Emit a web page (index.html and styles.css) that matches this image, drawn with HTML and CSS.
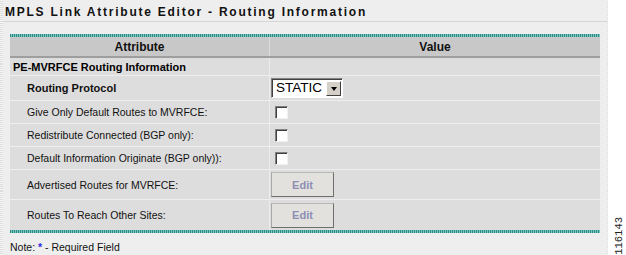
FILE: index.html
```html
<!DOCTYPE html>
<html>
<head>
<meta charset="utf-8">
<link rel="stylesheet" href="styles.css">
</head>
<body>
<div class="page">
  <div class="panel">
    <div class="title">MPLS Link Attribute Editor - Routing Information</div>
    <div class="body">
      <div class="rule"></div>
      <div class="grid">
        <div class="row head"><div class="cell">Attribute</div><div class="cell">Value</div></div>
        <div class="row section"><div class="cell">PE-MVRFCE Routing Information</div><div class="cell"></div></div>
        <div class="row r25"><div class="cell label bold">Routing Protocol</div><div class="cell val">
          <div class="select"><span class="sel-text">STATIC</span><span class="sel-btn"><span class="tri"></span></span></div>
        </div></div>
        <div class="row r23"><div class="cell label">Give Only Default Routes to MVRFCE:</div><div class="cell val"><span class="check"></span></div></div>
        <div class="row r23"><div class="cell label">Redistribute Connected (BGP only):</div><div class="cell val"><span class="check"></span></div></div>
        <div class="row r23"><div class="cell label">Default Information Originate (BGP only)):</div><div class="cell val"><span class="check"></span></div></div>
        <div class="row r30"><div class="cell label">Advertised Routes for MVRFCE:</div><div class="cell val"><span class="btn">Edit</span></div></div>
        <div class="row r30 last"><div class="cell label">Routes To Reach Other Sites:</div><div class="cell val"><span class="btn">Edit</span></div></div>
      </div>
      <div class="rule"></div>
      <div class="note">Note: <span class="star">*</span> - Required Field</div>
    </div>
  </div>
  <div class="side"><span class="fig">116143</span></div>
</div>
</body>
</html>
```
FILE: styles.css
```css
html, body {
  margin: 0;
  padding: 0;
  background: #ffffff;
  font-family: "Liberation Sans", Arial, sans-serif;
  color: #000;
}
.page {
  display: flex;
  width: 626px;
  height: 255px;
  overflow: hidden;
}
.panel {
  width: 604px;
  height: 255px;
  background: #efeeee;
  border-left: 3px solid transparent;
  border-image: repeating-linear-gradient(180deg, #dcdcdc 0 1px, #f6f6f6 1px 2px) 1;
  border-right: 1px solid #f8f8f8;
  box-sizing: content-box;
}
.title {
  height: 21px;
  border-bottom: 1px solid #d5d5d5;
  padding-left: 2px;
  font-weight: bold;
  font-size: 12px;
  letter-spacing: 1.76px;
  line-height: 25px;
  color: #111;
}
.body {
  padding: 12px 3px 0 7px;
}
.rule {
  height: 3px;
  width: 590px;
  background: repeating-linear-gradient(90deg, #2a8a84 0 1px, #7cc8c0 1px 2px);
}
.grid {
  width: 590px;
  background: #dedddd;
}
.row {
  display: grid;
  grid-template-columns: 260px 330px;
  box-sizing: border-box;
  border-bottom: 1px solid #efeeee;
}
.row.last { border-bottom: none; }
.cell {
  display: flex;
  align-items: center;
  font-size: 10.5px;
}
.cell:first-child {
  border-right: 1px solid #ececec;
}
.head {
  height: 21px;
  background: #c9c8c8;
  border-bottom: 2px solid #9e9e9e;
}
.head .cell {
  justify-content: center;
  font-weight: bold;
  font-size: 12px;
  color: #111;
}
.head .cell:first-child { border-right: 1px solid #dcdcdc; }
.section { height: 18px; }
.section .cell:first-child {
  font-weight: bold;
  font-size: 11px;
  padding-left: 3px;
}
.r25 { height: 25px; }
.r23 { height: 23px; }
.r30 { height: 30px; }
.label { padding-left: 17px; color: #111; }
.label.bold { font-weight: bold; font-size: 11px; }
.val { padding-left: 1px; }
.select {
  display: flex;
  align-items: center;
  width: 72px;
  height: 20px;
  box-sizing: border-box;
  background: #fff;
  border: 1px solid;
  border-color: #808080 #ffffff #ffffff #808080;
  box-shadow: inset 1px 1px 0 #404040;
}
.sel-text {
  flex: 1;
  font-size: 13.5px;
  padding-left: 4px;
  line-height: 18px;
}
.sel-btn {
  width: 15px;
  height: 15px;
  margin-right: 1px;
  margin-top: 1px;
  background: #d4d0c8;
  border: 1px solid;
  border-color: #ffffff #404040 #404040 #ffffff;
  box-sizing: border-box;
  display: flex;
  align-items: center;
  justify-content: center;
}
.tri {
  width: 0;
  height: 0;
  border-left: 3.5px solid transparent;
  border-right: 3.5px solid transparent;
  border-top: 4px solid #000;
  margin-top: 1px;
}
.check {
  display: block;
  width: 13px;
  height: 13px;
  box-sizing: border-box;
  margin-left: 4px;
  margin-top: 1px;
  background: #fff;
  border: 1px solid;
  border-color: #808080 #f0f0f0 #f0f0f0 #808080;
  box-shadow: inset 1px 1px 0 #404040;
}
.btn {
  display: flex;
  align-items: center;
  justify-content: center;
  width: 63px;
  height: 25px;
  box-sizing: border-box;
  background: #e3e1de;
  border: 1px solid;
  border-color: #b8b8b8 #6e6e6e #6e6e6e #a8a8a8;
  font-weight: bold;
  font-size: 11px;
  color: #8c8fb3;
}
.note {
  margin-top: 7px;
  margin-left: 0px;
  font-size: 10.5px;
  line-height: 14px;
  color: #111;
}
.star { color: #2a2ae0; font-weight: bold; }
.side {
  flex: 1;
  display: flex;
  align-items: flex-end;
  justify-content: center;
  padding-left: 3px;
}
.fig {
  writing-mode: vertical-rl;
  transform: rotate(180deg);
  font-family: "Liberation Mono", "Courier New", monospace;
  font-size: 10.5px;
  line-height: 10px;
  color: #222;
}
```
